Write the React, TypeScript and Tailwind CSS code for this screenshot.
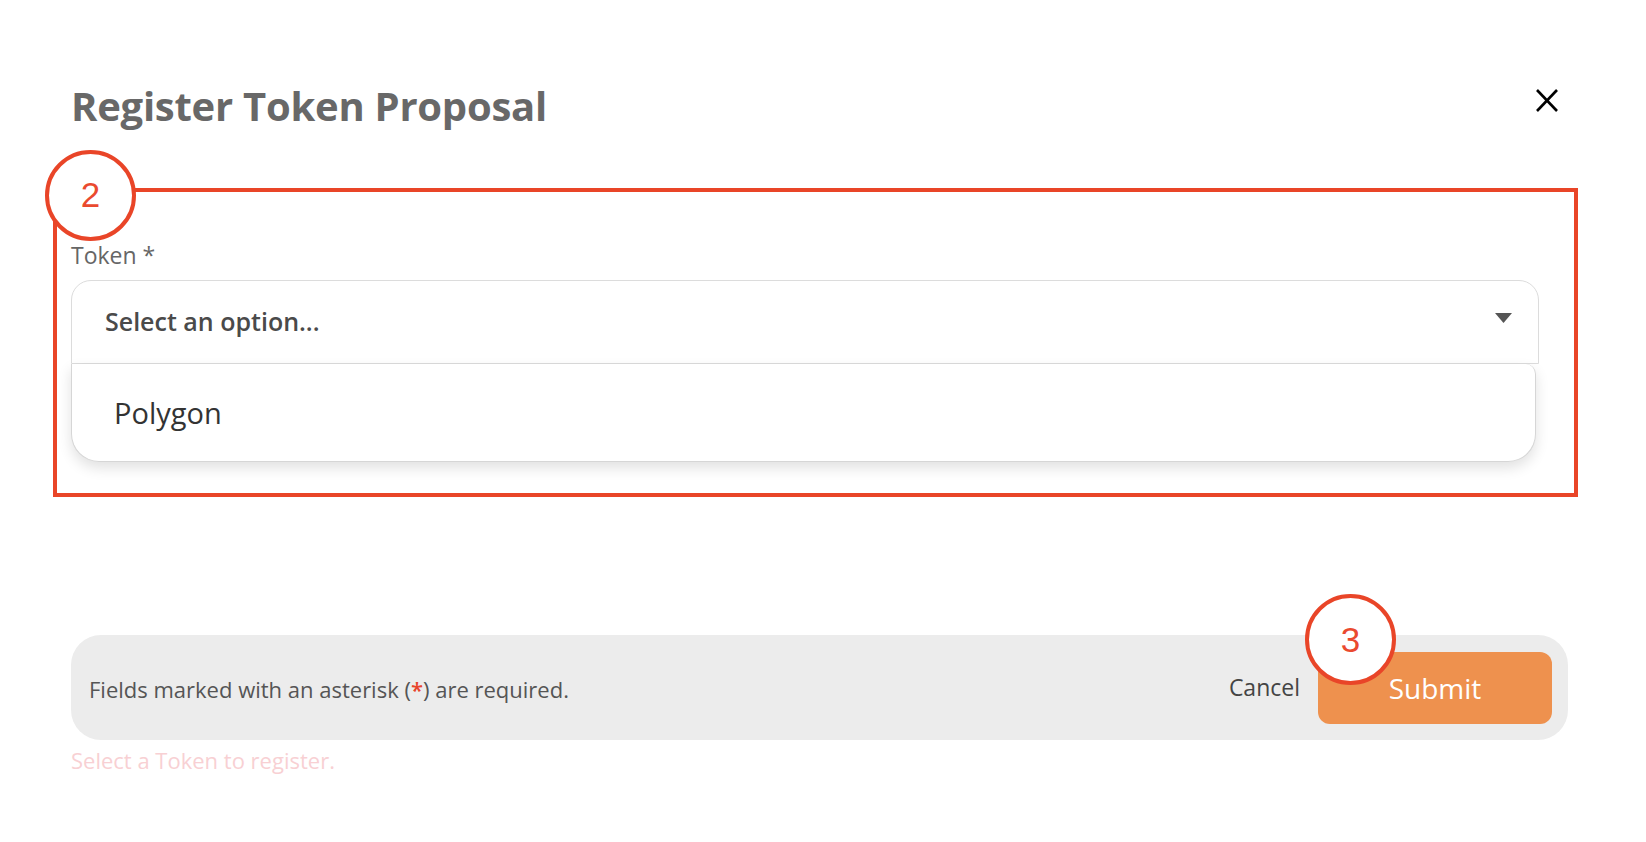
export default function App() {
  return (
    <div className="relative h-[842px] w-[1646px] overflow-hidden bg-white pl-[71px] pr-[78px] pt-[78px] font-['Open_Sans',sans-serif]">
      {/* Header */}
      <div className="flex items-start justify-between">
        <h1 className="text-[40px] font-bold leading-[56px] tracking-[-0.25px] text-[#686868]">Register Token Proposal</h1>
        <button className="mr-[9px] mt-[10px] flex h-[25px] w-[24px] items-center justify-center" aria-label="Close">
          <svg width="24" height="25" viewBox="0 0 24 25">
            <line x1="2" y1="2" x2="22" y2="23" stroke="#000" strokeWidth="2.6" />
            <line x1="22" y1="2" x2="2" y2="23" stroke="#000" strokeWidth="2.6" />
          </svg>
        </button>
      </div>

      {/* Field */}
      <div className="mt-[105px] text-[23px] leading-[32px] text-[#666]">Token *</div>
      <div className="relative mr-[29px] mt-[9px]">
        <div className="flex h-[84px] items-center justify-between rounded-t-[20px] border border-[#dcdcdc] bg-white pl-[33px] pr-[26px]">
          <span className="text-[25px] font-semibold text-[#4a4a4a]">Select an option...</span>
          <svg className="mb-[8px]" width="17" height="10" viewBox="0 0 17 10">
            <polygon points="0,0 17,0 8.5,10" fill="#555" />
          </svg>
        </div>
        <div className="absolute left-0 top-full flex h-[98px] w-[1465px] items-center rounded-b-[28px] rounded-tr-[10px] border border-t-0 border-[#d6d6d6] bg-white pl-[42px] shadow-[0_6px_14px_rgba(0,0,0,0.12)]">
          <span className="text-[29px] text-[#333]">Polygon</span>
        </div>
      </div>

      {/* Footer */}
      <div className="mt-[271px] flex h-[105px] items-center justify-between rounded-[30px] bg-[#ececec] pl-[18px] pr-[16px]">
        <span className="mt-[4px] text-[22px] text-[#555]">
          Fields marked with an asterisk (<span className="font-semibold text-[#e8452c]">*</span>) are required.
        </span>
        <div className="flex items-center gap-[18px]">
          <span className="text-[23px] text-[#444]">Cancel</span>
          <button className="flex h-[72px] w-[234px] items-center justify-center rounded-[12px] bg-[#ee914e] text-[28px] text-white">
            Submit
          </button>
        </div>
      </div>
      <div className="mt-[5px] text-[22px] leading-[30px] text-[#f8d0d3]">Select a Token to register.</div>

      {/* Annotations */}
      <div className="pointer-events-none absolute left-[53px] top-[188px] h-[309px] w-[1525px] border-[4.5px] border-[#e94528]" />
      <div className="pointer-events-none absolute left-[45px] top-[150px] flex h-[91px] w-[91px] items-center justify-center rounded-full border-[4px] border-[#e94528] bg-white font-['Liberation_Sans',Arial,sans-serif] text-[35px] text-[#ea4a2f]">
        2
      </div>
      <div className="pointer-events-none absolute left-[1305px] top-[594px] flex h-[91px] w-[91px] items-center justify-center rounded-full border-[4px] border-[#e94528] bg-white pt-[2px] font-['Liberation_Sans',Arial,sans-serif] text-[35px] text-[#ea4a2f]">
        3
      </div>
    </div>
  );
}
